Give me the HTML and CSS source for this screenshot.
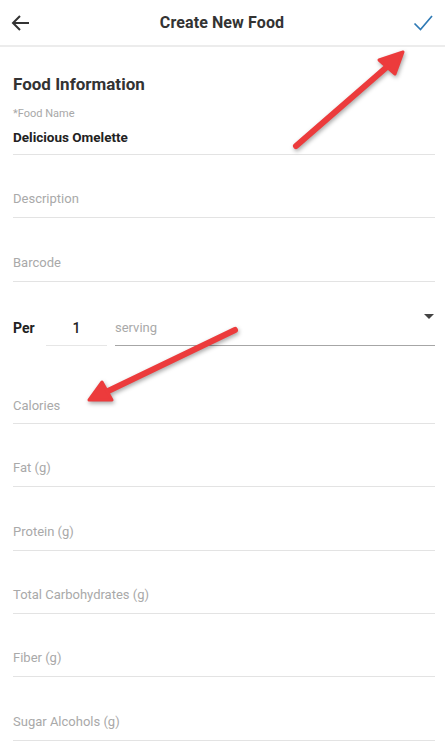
FILE: index.html
```html
<!DOCTYPE html>
<html>
<head>
<meta charset="utf-8">
<link rel="stylesheet" href="styles.css">
</head>
<body>
<div class="screen">
  <header class="topbar">
    <svg class="icon back" viewBox="0 0 24 24" width="24" height="24"><path d="M20 12H5M11 5l-7 7 7 7" fill="none" stroke="#333" stroke-width="2"/></svg>
    <div class="title">Create New Food</div>
    <svg class="icon check" viewBox="0 0 24 24" width="24" height="24"><path d="M3.5 12.5l6 6L21 5" fill="none" stroke="#2f7ab5" stroke-width="1.7"/></svg>
  </header>
  <main class="form">
    <h2 class="section-title">Food Information</h2>
    <div class="name-field">
      <div class="small-label">*Food Name</div>
      <div class="value">Delicious Omelette</div>
    </div>
    <div class="field">Description</div>
    <div class="field">Barcode</div>
    <div class="per-row">
      <div class="per">Per</div>
      <div class="qty">1</div>
      <div class="unit"><span>serving</span><span class="caret"></span></div>
    </div>
    <div class="field first-nutrient">Calories</div>
    <div class="field">Fat (g)</div>
    <div class="field">Protein (g)</div>
    <div class="field">Total Carbohydrates (g)</div>
    <div class="field">Fiber (g)</div>
    <div class="field">Sugar Alcohols (g)</div>
  </main>
  <svg class="annotations" viewBox="0 0 445 755" width="445" height="755">
    <g fill="#ec3b3c" stroke="#ec3b3c" stroke-linecap="round" stroke-linejoin="round">
      <line x1="296" y1="146" x2="388" y2="66" stroke-width="6"/>
      <polygon points="403,52 379,60 395,74" stroke-width="3"/>
      <line x1="235" y1="330" x2="104" y2="393" stroke-width="6"/>
      <polygon points="89,400 102,382 112,400" stroke-width="3"/>
    </g>
  </svg>
</div>
</body>
</html>
```
FILE: styles.css
```css
* { box-sizing: border-box; }
html, body { margin: 0; padding: 0; background: #fff; }
body { font-family: Roboto, "Noto Sans", "Liberation Sans", sans-serif; color: #222; }
.screen { position: relative; width: 445px; height: 755px; overflow: hidden; }
.topbar {
  height: 47px;
  display: flex;
  align-items: center;
  justify-content: space-between;
  padding: 0 10px 0 9px;
  border-bottom: 2px solid #ececec;
}
.title { font-size: 16px; font-weight: 700; color: #333; letter-spacing: 0.1px; }
.icon { display: block; }
.back { width: 24px; height: 24px; }
.check { width: 24px; height: 24px; }
.form { padding: 0 10px 0 13px; }
.section-title { margin: 25px 0 0; font-size: 17px; line-height: 24px; font-weight: 700; color: #333; }
.name-field { padding-top: 11px; padding-bottom: 7px; border-bottom: 1px solid #e3e3e3; }
.small-label { font-size: 11px; line-height: 14px; color: #a8a8a8; }
.value { margin-top: 6px; font-size: 13.5px; line-height: 20px; font-weight: 700; color: #222; }
.field {
  padding: 34.4px 0 8px;
  font-size: 13px;
  line-height: 20px;
  color: #a9a9a9;
  border-bottom: 1px solid #e3e3e3;
}
.field.first-nutrient { padding-top: 50px; padding-bottom: 7px; }
.per-row { display: flex; align-items: flex-end; padding-top: 36px; }
.per { width: 33px; font-size: 14px; font-weight: 700; line-height: 20px; padding-bottom: 8px; color: #222; }
.qty {
  width: 61px; font-size: 14px; font-weight: 500; line-height: 20px; padding-bottom: 7px; text-align: center;
  border-bottom: 1px solid #e6e6e6; color: #222;
}
.unit {
  flex: 1; margin-left: 8px; display: flex; justify-content: space-between; align-items: flex-start;
  font-size: 13px; line-height: 20px; padding-bottom: 7px; color: #a9a9a9;
  border-bottom: 1px solid #a6a6a6;
}
.caret {
  width: 0; height: 0; margin-top: -4px; margin-right: 1px;
  border-left: 5px solid transparent; border-right: 5px solid transparent; border-top: 5px solid #444;
}
.annotations { position: absolute; left: 0; top: 0; pointer-events: none; filter: drop-shadow(1px 2px 2px rgba(0,0,0,0.35)); }
```
